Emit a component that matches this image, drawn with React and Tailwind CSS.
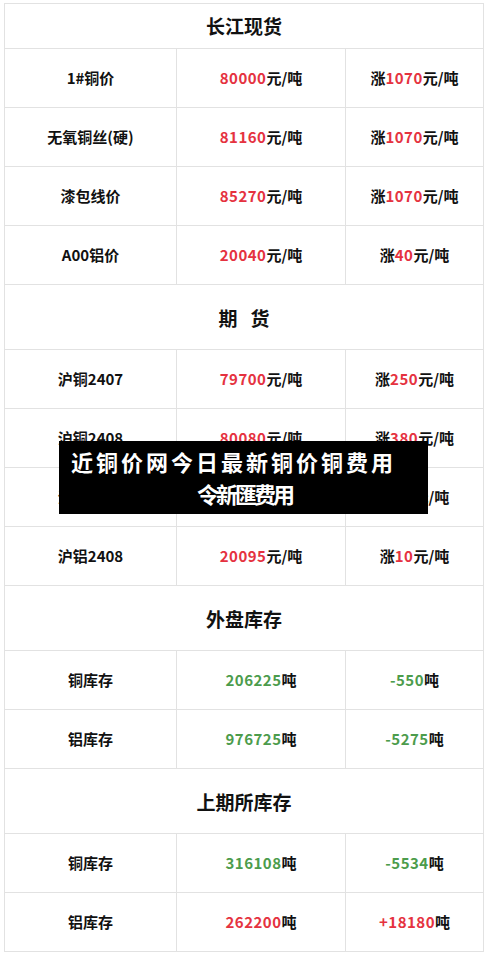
import React from 'react'

const RED = 'text-[#e5323f]'
const GREEN = 'text-[#4c9c4c]'

const sections = [
    {
        title: '长江现货',
        first: true,
        rows: [
            ['1#铜价', ['80000', '元/吨', RED], ['涨', '1070', '元/吨', RED]],
            ['无氧铜丝(硬)', ['81160', '元/吨', RED], ['涨', '1070', '元/吨', RED]],
            ['漆包线价', ['85270', '元/吨', RED], ['涨', '1070', '元/吨', RED]],
            ['A00铝价', ['20040', '元/吨', RED], ['涨', '40', '元/吨', RED]],
        ],
    },
    {
        title: '期   货',
        rows: [
            ['沪铜2407', ['79700', '元/吨', RED], ['涨', '250', '元/吨', RED]],
            ['沪铜2408', ['80080', '元/吨', RED], ['涨', '380', '元/吨', RED]],
            ['沪铝2407', ['20060', '元/吨', RED], ['涨', '20', '元/吨', RED]],
            ['沪铝2408', ['20095', '元/吨', RED], ['涨', '10', '元/吨', RED]],
        ],
    },
    {
        title: '外盘库存',
        rows: [
            ['铜库存', ['206225', '吨', GREEN], ['', '-550', '吨', GREEN]],
            ['铝库存', ['976725', '吨', GREEN], ['', '-5275', '吨', GREEN]],
        ],
    },
    {
        title: '上期所库存',
        rows: [
            ['铜库存', ['316108', '吨', GREEN], ['', '-5534', '吨', GREEN]],
            ['铝库存', ['262200', '吨', RED], ['', '+18180', '吨', RED]],
        ],
    },
]

const App = () => {
    return (
        <main className="relative min-h-[957px] bg-white pt-[3px] px-[4px] font-['Noto_Sans_CJK_SC','Noto_Sans',sans-serif] text-[#111]">
            <table className="w-[480px] border-collapse table-fixed">
                <colgroup>
                    <col className="w-[172px]" />
                    <col className="w-[169px]" />
                    <col />
                </colgroup>
                <tbody>
                    {sections.map((s) => (
                        <React.Fragment key={s.title}>
                            <tr>
                                <td colSpan={3}
                                    className={`border border-[#e2e2e2] text-center font-bold text-[19px] whitespace-pre ${s.first ? 'h-[45px]' : 'h-[65px] pt-[3px]'}`}>
                                    {s.title}
                                </td>
                            </tr>
                            {s.rows.map(([name, price, change]) => (
                                <tr key={name} className="h-[59px]">
                                    <td className="border border-[#e2e2e2] text-center font-bold text-[15px]">{name}</td>
                                    <td className="border border-[#e2e2e2] text-center font-bold text-[15px]">
                                        <span className={`${price[2]} tracking-[0.5px]`}>{price[0]}</span>{price[1]}
                                    </td>
                                    <td className="border border-[#e2e2e2] text-center font-bold text-[15px]">
                                        {change[0]}<span className={`${change[3]} tracking-[0.5px]`}>{change[1]}</span>{change[2]}
                                    </td>
                                </tr>
                            ))}
                        </React.Fragment>
                    ))}
                </tbody>
            </table>

            {/* title overlay */}
            <div className="absolute left-[59px] top-[441px] w-[369px] h-[73px] bg-black text-white font-bold text-[22px] leading-none">
                <div className="absolute left-[12px] top-[9px] tracking-[3px] whitespace-nowrap">近铜价网今日最新铜价铜费用</div>
                <div className="absolute left-[138px] top-[41px] tracking-[-3px] whitespace-nowrap">令新匯费用</div>
            </div>
        </main>
    )
}

export default App
